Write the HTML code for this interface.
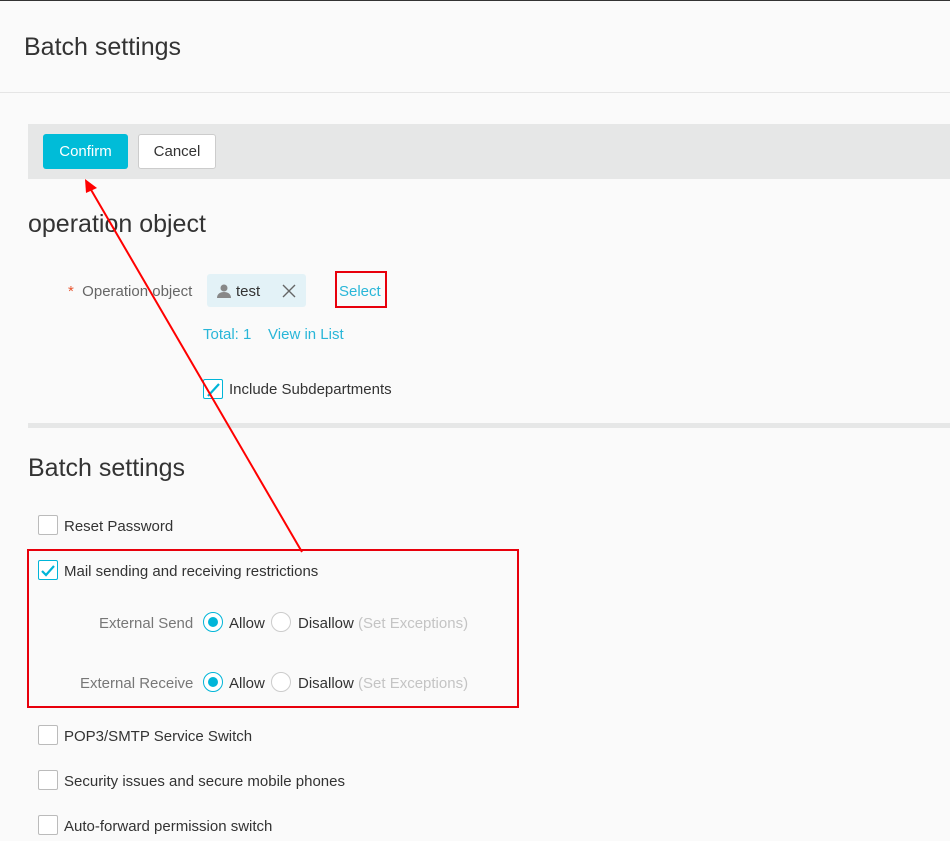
<!DOCTYPE html>
<html><head><style>
*{margin:0;padding:0;box-sizing:border-box}
body{width:950px;height:841px;background:#fafafa;font-family:"Liberation Sans",sans-serif;position:relative;overflow:hidden;color:#333}
.a{position:absolute;white-space:nowrap}
.cb{position:absolute;width:20px;height:20px;border:1px solid #bbb;border-radius:2px;background:#fff}
.cb.on{border-color:#00b5d8}
.rd{position:absolute;width:20px;height:20px;border:1px solid #ccc;border-radius:50%;background:#fff}
.rd.on{border-color:#00b5d8}
.rd.on::after{content:"";position:absolute;left:4px;top:4px;width:10px;height:10px;border-radius:50%;background:#00b5d8}
.t{font-size:15px}
</style></head><body>
<div class="a" style="left:0;top:0;width:950px;height:1px;background:#333"></div>
<div class="a" style="left:24px;top:33px;font-size:25px;color:#333">Batch settings</div>
<div class="a" style="left:0;top:92px;width:950px;height:1px;background:#e5e5e5"></div>
<div class="a" style="left:28px;top:124px;width:922px;height:55px;background:#e6e7e7"></div>
<div class="a" style="left:43px;top:134px;width:85px;height:35px;background:#00bcd8;border-radius:3px;color:#fff;font-size:15px;text-align:center;line-height:35px">Confirm</div>
<div class="a" style="left:138px;top:134px;width:78px;height:35px;background:#fff;border:1px solid #ccc;border-radius:3px;font-size:15px;text-align:center;line-height:33px">Cancel</div>
<div class="a" style="left:28px;top:210px;font-size:25px;color:#333">operation object</div>
<div class="a t" style="left:68px;top:283px;color:#666"><span style="color:#e8542f">*</span>&nbsp; Operation object</div>
<div class="a" style="left:207px;top:274px;width:99px;height:33px;background:#e3f2f7;border-radius:3px"></div>
<svg class="a" style="left:216px;top:283px" width="16" height="16" viewBox="0 0 16 16"><circle cx="8" cy="5" r="3.5" fill="#888"/><path d="M1 15c0-4 3-6 7-6s7 2 7 6z" fill="#888"/></svg>
<div class="a t" style="left:236px;top:283px;color:#333">test</div>
<svg class="a" style="left:281px;top:283px" width="16" height="16"><path d="M2 2L14 14M14 2L2 14" stroke="#666" stroke-width="1.4"/></svg>
<div class="a t" style="left:339px;top:283px;color:#29b6d8">Select</div>
<div class="a" style="left:335px;top:271px;width:52px;height:37px;border:2px solid #e8000c"></div>
<div class="a t" style="left:203px;top:326px;color:#29b6d8">Total: 1 &nbsp;&nbsp; View in List</div>
<div class="cb on" style="left:203px;top:379px"></div>
<svg class="a" style="left:203px;top:379px" width="20" height="20"><path d="M5 17L16 5" stroke="#00b5d8" stroke-width="2.2"/></svg>
<div class="a t" style="left:229px;top:381px">Include Subdepartments</div>
<div class="a" style="left:28px;top:423px;width:922px;height:5px;background:#e6e7e7"></div>
<div class="a" style="left:28px;top:454px;font-size:25px">Batch settings</div>
<div class="cb" style="left:38px;top:515px"></div>
<div class="a t" style="left:64px;top:518px">Reset Password</div>
<div class="a" style="left:27px;top:549px;width:492px;height:159px;border:2px solid #e8000c"></div>
<div class="cb on" style="left:38px;top:560px"></div>
<svg class="a" style="left:38px;top:560px" width="20" height="20"><path d="M4 11L8 15L16 6" stroke="#00b5d8" stroke-width="2.2" fill="none"/></svg>
<div class="a t" style="left:64px;top:563px">Mail sending and receiving restrictions</div>
<div class="a t" style="left:99px;top:615px;color:#777">External Send</div>
<div class="rd on" style="left:203px;top:612px"></div>
<div class="a t" style="left:229px;top:615px">Allow</div>
<div class="rd" style="left:271px;top:612px"></div>
<div class="a t" style="left:298px;top:615px">Disallow <span style="color:#c4c4c4">(Set Exceptions)</span></div>
<div class="a t" style="left:80px;top:675px;color:#777">External Receive</div>
<div class="rd on" style="left:203px;top:672px"></div>
<div class="a t" style="left:229px;top:675px">Allow</div>
<div class="rd" style="left:271px;top:672px"></div>
<div class="a t" style="left:298px;top:675px">Disallow <span style="color:#c4c4c4">(Set Exceptions)</span></div>
<div class="cb" style="left:38px;top:725px"></div>
<div class="a t" style="left:64px;top:728px">POP3/SMTP Service Switch</div>
<div class="cb" style="left:38px;top:770px"></div>
<div class="a t" style="left:64px;top:773px">Security issues and secure mobile phones</div>
<div class="cb" style="left:38px;top:815px"></div>
<div class="a t" style="left:64px;top:818px">Auto-forward permission switch</div>
<svg class="a" style="left:0;top:0" width="950" height="841"><line x1="302" y1="552" x2="90" y2="188" stroke="#f00" stroke-width="2"/><path d="M85 179L97 188L86 193Z" fill="#f00"/></svg>
</body></html>
